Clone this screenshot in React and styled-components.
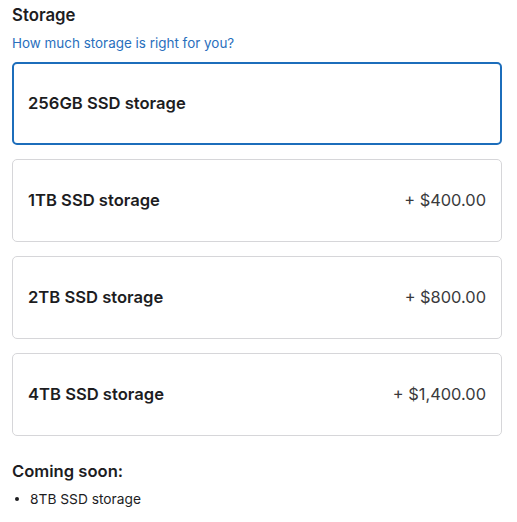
import React from "react";
import styled, { createGlobalStyle } from "styled-components";

const Global = createGlobalStyle`
  body {
    margin: 0;
    background: #fff;
    font-family: Inter, "Noto Sans", sans-serif;
    color: #1d1d1f;
  }
`;

const Page = styled.div`
  width: 490px;
  padding: 4px 16px 0 12px;
`;

const Title = styled.h2`
  margin: 0;
  font-size: 16.8px;
  font-weight: 600;
  line-height: 22px;
`;

const HelpLink = styled.a`
  display: block;
  margin-top: 8px;
  font-size: 13.45px;
  line-height: 18px;
  color: #2a6fbd;
  text-decoration: none;
`;

const Options = styled.div`
  display: flex;
  flex-direction: column;
  gap: 14px;
  margin-top: 10px;
`;

const Option = styled.div`
  display: flex;
  align-items: center;
  justify-content: space-between;
  box-sizing: border-box;
  height: 83px;
  padding: 0 ${(p) => (p.$selected ? 14 : 15)}px 1px;
  border: ${(p) => (p.$selected ? "2px solid #1c6dbb" : "1px solid #d6d6d9")};
  border-radius: 5px;
`;

const Name = styled.span`
  font-size: 16.6px;
  font-weight: 600;
  color: #1d1d1f;
`;

const Price = styled.span`
  font-size: 16.4px;
  color: #3a3a3c;
`;

const Soon = styled.h3`
  margin: 24px 0 0;
  font-size: 16.6px;
  font-weight: 600;
  line-height: 22px;
`;

const List = styled.ul`
  list-style: none;
  margin: 7px 0 0;
  padding: 0;
`;

const Item = styled.li`
  display: flex;
  align-items: center;
  gap: 11px;
  font-size: 13.75px;
  line-height: 20px;
  color: #1d1d1f;

  &::before {
    content: "";
    width: 4px;
    height: 4px;
    margin-left: 3px;
    border-radius: 50%;
    background: #1d1d1f;
  }
`;

const options = [
  { name: "256GB SSD storage", selected: true },
  { name: "1TB SSD storage", price: "+ $400.00" },
  { name: "2TB SSD storage", price: "+ $800.00" },
  { name: "4TB SSD storage", price: "+ $1,400.00" },
];

export default function App() {
  return (
    <Page>
      <Global />
      <Title>Storage</Title>
      <HelpLink href="#">How much storage is right for you?</HelpLink>
      <Options>
        {options.map((o) => (
          <Option key={o.name} $selected={o.selected}>
            <Name>{o.name}</Name>
            {o.price && <Price>{o.price}</Price>}
          </Option>
        ))}
      </Options>
      <Soon>Coming soon:</Soon>
      <List>
        <Item>8TB SSD storage</Item>
      </List>
    </Page>
  );
}
